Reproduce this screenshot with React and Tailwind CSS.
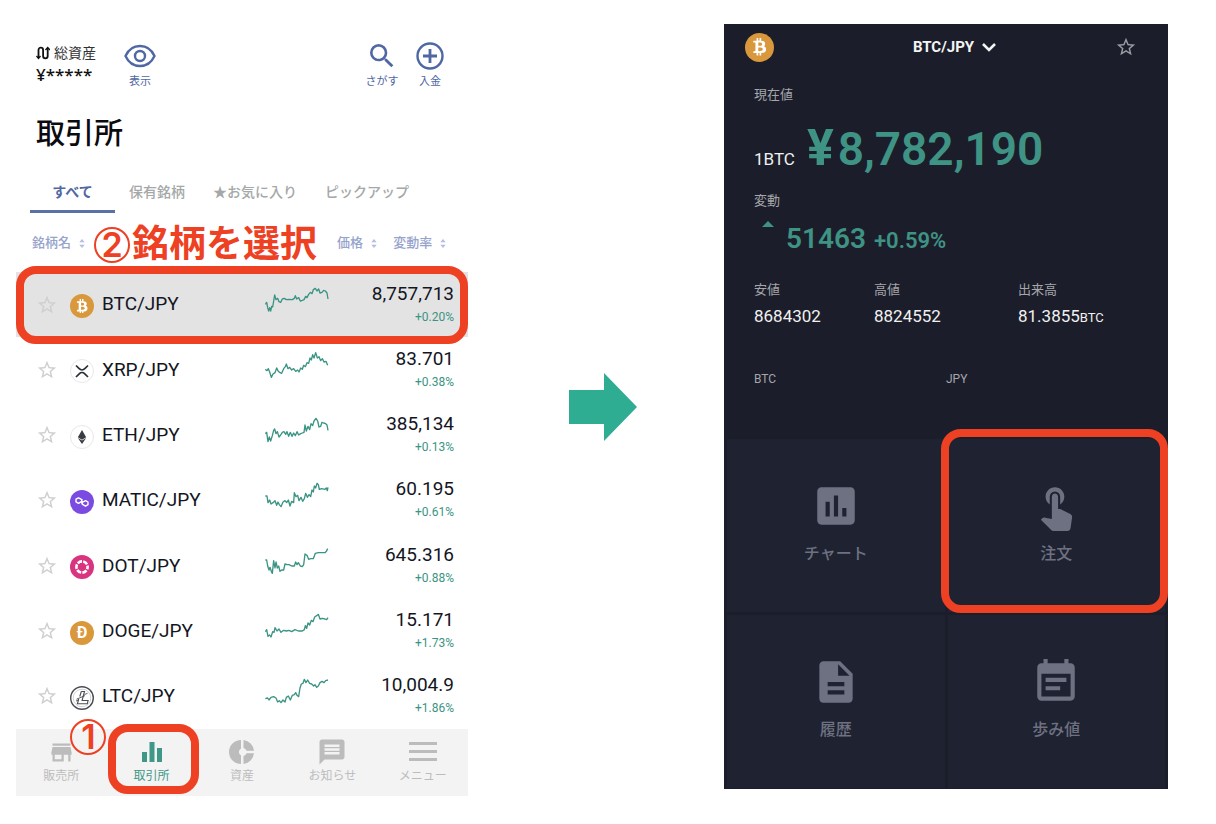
import {
  MdDescription,
  MdEventNote,
  MdInsertChart,
  MdMessage,
  MdSearch,
  MdStarBorder,
  MdStore,
  MdTouchApp,
} from "react-icons/md";
import { FaBtc, FaEthereum } from "react-icons/fa";

function BtcIcon({ className }) {
  return (
    <span className={`flex items-center justify-center rounded-full bg-[#d9983c] text-white ${className}`}>
      <FaBtc className="h-3/5 w-3/5" />
    </span>
  );
}

function XrpIcon() {
  return (
    <svg viewBox="0 0 24 24" className="size-6" fill="none">
      <circle cx="12" cy="12" r="11.5" fill="#fff" stroke="#e8e8e8" />
      <path d="M6 6.5l3.2 3.2a4 4 0 0 0 5.6 0L18 6.5M6 18l3.2-3.2a4 4 0 0 1 5.6 0L18 18" stroke="#2b2f38" strokeWidth="1.7" />
    </svg>
  );
}

function EthIcon() {
  return (
    <span className="flex size-6 items-center justify-center rounded-full border border-[#e8e8e8] bg-white text-[#3a3c44]">
      <FaEthereum className="size-3.5" />
    </span>
  );
}

function MaticIcon() {
  return (
    <svg viewBox="0 0 24 24" className="size-6" fill="none">
      <circle cx="12" cy="12" r="12" fill="#7b4ae0" />
      <path
        d="M12.600 10.300L11 9.200 8.500 7.800 6 9.200v2.700l2.500 1.400 2.400-1.400 2.200 1.200M11.400 13.300l1.600 1.400 2.500 1.500 2.500-1.500v-2.700l-2.500-1.400-2.400 1.400-2.200-1.200"
        stroke="#fff"
        strokeWidth="1.4"
        strokeLinejoin="round"
      />
    </svg>
  );
}

function DotIcon() {
  return (
    <svg viewBox="0 0 24 24" className="size-6" fill="none">
      <circle cx="12" cy="12" r="12" fill="#d9347f" />
      <circle cx="12" cy="12" r="5.6" stroke="#fff" strokeWidth="2.600" strokeDasharray="4.6 1.26" strokeDashoffset="2.3" />
    </svg>
  );
}

function DogeIcon() {
  return (
    <span className="flex size-6 items-center justify-center rounded-full bg-[#d9983c] text-base font-bold text-white">
      Ð
    </span>
  );
}

function LtcIcon() {
  return (
    <svg viewBox="0 0 24 24" className="size-6" fill="none" stroke="#4a4d55">
      <circle cx="12" cy="12" r="11.3" fill="#fff" strokeWidth="1.4" />
      <circle cx="12" cy="12" r="8.8" stroke="#c4c6ca" strokeWidth="0.8" />
      <path d="M11.3 5.5h3.2l-2.4 9h6l-.8 3.3H7.4L8.700 13M11.300 5.500L9.800 10.500" strokeWidth="1.1" />
      <path d="M6.500 13.200l8.500-3.600M6 15l3-1.300M14.500 8.500l3-1.200" strokeWidth="0.9" />
    </svg>
  );
}

const PAIRS = [
  {
    name: "BTC/JPY",
    price: "8,757,713",
    change: "+0.20%",
    icon: <BtcIcon className="size-6" />,
    line: "1,52 5,46 8,62 11,72 14,62 17,72 20,58 23,60 26,42 29,24 33,38 38,34 42,44 47,46 52,36 58,34 64,38 72,37 82,38 88,34 91,26 95,36 101,32 106,42 112,40 117,38 122,28 126,32 131,22 136,16 141,20 145,8 151,4 156,12 161,6 165,18 171,16 176,10 181,12 186,18 189,36",
  },
  {
    name: "XRP/JPY",
    price: "83.701",
    change: "+0.38%",
    icon: <XrpIcon />,
    line: "1,52 6,56 10,50 14,60 19,76 24,66 30,62 35,48 40,58 45,62 50,64 56,50 61,44 64,36 69,50 74,46 80,54 86,50 92,58 98,54 102,60 107,48 112,52 116,40 121,44 126,32 131,34 135,18 139,24 143,8 147,18 152,2 157,18 162,14 167,26 172,20 177,30 183,28 188,40",
  },
  {
    name: "ETH/JPY",
    price: "385,134",
    change: "+0.13%",
    icon: <EthIcon />,
    line: "1,50 5,46 9,74 13,60 17,72 22,56 26,40 29,36 33,50 37,44 42,60 47,54 52,46 57,44 62,52 66,44 71,58 76,46 81,58 86,48 91,56 96,44 101,54 107,50 112,48 117,46 120,24 124,42 129,28 134,38 138,20 143,26 147,12 153,4 158,12 162,30 167,28 171,16 176,18 182,20 186,24 189,40",
  },
  {
    name: "MATIC/JPY",
    price: "60.195",
    change: "+0.61%",
    icon: <MaticIcon />,
    line: "1,42 6,42 9,62 14,54 18,66 24,62 30,56 35,70 39,60 43,68 48,74 54,60 60,56 65,62 70,54 75,72 80,58 86,62 88,32 93,44 98,40 102,56 108,46 113,58 118,50 122,34 127,46 132,38 137,44 141,24 145,30 148,12 152,18 156,4 160,8 163,22 170,20 180,22 184,18 187,26 189,16",
  },
  {
    name: "DOT/JPY",
    price: "645.316",
    change: "+0.88%",
    icon: <DotIcon />,
    line: "1,36 5,36 8,54 12,66 15,58 19,70 22,76 26,38 30,60 33,42 37,60 41,54 45,70 50,66 56,66 60,48 66,50 72,50 80,54 88,54 92,42 96,50 100,44 106,54 112,56 116,50 120,18 126,22 131,34 137,32 145,32 151,16 160,14 180,14 184,10 188,2",
  },
  {
    name: "DOGE/JPY",
    price: "15.171",
    change: "+1.73%",
    icon: <DogeIcon />,
    line: "1,56 5,50 9,70 14,66 18,72 23,56 27,58 30,44 36,54 42,48 48,58 56,52 64,54 72,52 80,56 90,50 100,54 112,54 118,50 121,38 125,46 129,30 134,36 139,22 144,26 149,12 155,8 160,4 165,18 172,16 180,18 185,20 189,14",
  },
  {
    name: "LTC/JPY",
    price: "10,004.9",
    change: "+1.86%",
    icon: <LtcIcon />,
    line: "1,62 8,60 12,66 18,58 26,56 33,60 38,72 43,68 48,74 54,66 60,72 64,58 70,54 76,66 82,52 88,50 92,44 96,52 101,56 105,30 109,18 114,16 118,4 123,14 128,6 134,16 140,18 146,24 150,20 155,28 160,24 165,14 171,10 177,14 182,8 189,6",
  },
];

function BarsIcon() {
  return (
    <svg viewBox="0 0 20 20" className="size-5" fill="currentColor">
      <path d="M0 10h5v10H0zM7.500 0h5v20h-5zM15 6h5v14h-5z" />
    </svg>
  );
}

function DonutIcon() {
  return (
    <svg viewBox="0 0 26 26" className="size-[26px]" fill="currentColor">
      <path d="M12 1v8.500a4 4 0 0 0 0 7V25A12 12 0 0 1 12 1zM14.500 1A12 12 0 0 1 25 11.700h-7.500a4 4 0 0 0-3-2.700zM14.500 17a4 4 0 0 0 3-2.700H25A12 12 0 0 1 14.500 25z" />
    </svg>
  );
}

function MenuIcon() {
  return (
    <svg viewBox="0 0 28 20" className="h-5 w-7" fill="currentColor">
      <path d="M0 0h28v3H0zM0 8h28v3H0zM0 16h28v3H0z" />
    </svg>
  );
}

const NAV = [
  { label: "販売所", icon: <MdStore className="size-[27px]" /> },
  { label: "取引所", icon: <BarsIcon />, active: true },
  { label: "資産", icon: <DonutIcon /> },
  { label: "お知らせ", icon: <MdMessage className="size-[30px]" /> },
  { label: "メニュー", icon: <MenuIcon /> },
];

const TILES = [
  { label: "チャート", Icon: MdInsertChart },
  { label: "注文", Icon: MdTouchApp, marked: true },
  { label: "履歴", Icon: MdDescription },
  { label: "歩み値", Icon: MdEventNote },
];

// Red frame drawn over the control the step points at
function Marker({ className }) {
  return <span className={`pointer-events-none absolute z-10 rounded-[20px] border-8 border-[#ee4023] ${className}`} />;
}

function StepNumber({ children }) {
  return (
    <span className="flex size-9 shrink-0 items-center justify-center rounded-full border-2 border-[#ee4023] font-[Inter] text-[34px] leading-none font-semibold text-[#ee4023]">
      {children}
    </span>
  );
}

function SortArrows() {
  return (
    <svg viewBox="0 0 6 10" className="ml-2 inline h-[9px] w-[6px] opacity-70" fill="currentColor">
      <path d="M3 0l3 3.500H0zM3 10L0 6.500h6z" />
    </svg>
  );
}

function HeaderAction({ label, children }) {
  return (
    <button className="flex w-12 flex-col items-center text-[11px] leading-4 text-[#4f67a3]">
      <span className="flex h-7 items-center">{children}</span>
      <span className="mt-1">{label}</span>
    </button>
  );
}

function Sparkline({ points }) {
  return (
    <svg viewBox="0 0 192 78" className="mb-[10px] h-[26px] w-16" fill="none">
      <polyline points={points} stroke="#3a9483" strokeWidth="4" strokeLinejoin="round" />
    </svg>
  );
}

function Exchange() {
  return (
    <section>
      {/* Header */}
      <header className="flex h-[68px] items-start pt-[18px] pr-3.5 pl-5">
        <div className="w-20">
          <div className="flex h-[22px] items-center gap-1 text-[14px] text-[#333]">
            <svg viewBox="0 0 14 14" className="h-[14px] w-[14px] shrink-0" fill="none" stroke="#111" strokeWidth="1.8">
              <path d="M2.500 12V4a2.300 2.300 0 0 1 4.600 0v6a2.300 2.300 0 0 0 4.600 0V2" />
              <path d="M.5 10l2 2.500 2-2.500M9.500 4l2.200-2.500L14 4" strokeWidth="1.300" />
            </svg>
            総資産
          </div>
          <div className="h-[22px] font-['Noto_Sans'] text-[17px] leading-[22px] font-medium text-[#111]">¥*****</div>
        </div>
        <HeaderAction label="表示">
          <svg viewBox="0 0 32 24" className="h-6 w-8" fill="none" stroke="currentColor" strokeWidth="2.400">
            <path d="M1.500 12C4.500 5.500 10 2 16 2s11.500 3.500 14.500 10C27.500 18.500 22 22 16 22S4.500 18.500 1.500 12z" />
            <circle cx="16" cy="12" r="5" />
          </svg>
        </HeaderAction>
        <div className="ml-auto flex">
          <HeaderAction label="さがす">
            <MdSearch className="size-8" />
          </HeaderAction>
          <HeaderAction label="入金">
            <svg viewBox="0 0 28 28" className="size-7" fill="none" stroke="currentColor" strokeWidth="2.400">
              <circle cx="14" cy="14" r="12.500" />
              <path d="M14 7v14M7 14h14" strokeWidth="2.800" />
            </svg>
          </HeaderAction>
        </div>
      </header>

      <h1 className="mt-[22px] px-5 text-[29px] leading-10 font-medium text-[#0b0b0f]">取引所</h1>

      {/* Tabs */}
      <nav className="mt-[25px] flex h-[34px] pl-3.5 text-[14px] font-medium whitespace-nowrap text-[#a5a8a8]">
        <button className="w-[85px] border-b-3 border-[#5a70a8] pb-1 font-bold text-[#4f67a3]">すべて</button>
        <button className="border-b-3 border-transparent px-3.5 pb-1">保有銘柄</button>
        <button className="border-b-3 border-transparent px-3.5 pb-1">★お気に入り</button>
        <button className="border-b-3 border-transparent px-3.5 pb-1">ピックアップ</button>
      </nav>

      {/* Pairs */}
      <div className="relative">
        <div className="absolute top-2.5 left-[78px] z-10 flex items-center gap-0.5 text-[37px] leading-[44px] font-bold whitespace-nowrap text-[#ee4023]">
          <StepNumber>2</StepNumber>
          銘柄を選択
        </div>
        <table className="h-[516px] w-full table-fixed">
          <colgroup>
            <col className="w-[55%]" />
            <col className="w-[16%]" />
            <col className="w-[12%]" />
            <col className="w-[17%]" />
          </colgroup>
          <thead>
            <tr className="h-[59px] text-left text-[13px] text-[#96a3cc]">
              <th colSpan={2} className="pl-4 font-medium">
                銘柄名
                <SortArrows />
              </th>
              <th className="font-medium whitespace-nowrap">
                価格
                <SortArrows />
              </th>
              <th className="pl-0.5 font-medium whitespace-nowrap">
                変動率
                <SortArrows />
              </th>
            </tr>
          </thead>
          <tbody>
            {PAIRS.map((pair, i) => (
              <tr key={pair.name} className={i === 0 ? "relative bg-[#e3e3e3]" : ""}>
                <td className="py-0 pl-5">
                  {i === 0 && <Marker className="inset-x-0 -top-1.5 -bottom-[7px]" />}
                  <div className="flex items-center">
                    <MdStarBorder className="size-[22px] text-[#cfcfcf]" />
                    <span className="mt-[3px] ml-3 shrink-0">{pair.icon}</span>
                    <span className="ml-2 text-[19px] text-[#14161f]">{pair.name}</span>
                  </div>
                </td>
                <td className="p-0">
                  <Sparkline points={pair.line} />
                </td>
                <td colSpan={2} className="py-0 pr-3.5 text-right">
                  <div className="text-[19px] leading-6 text-[#14161f]">{pair.price}</div>
                  <div className="text-[12px] leading-[22px] text-[#3a9483]">{pair.change}</div>
                </td>
              </tr>
            ))}
          </tbody>
        </table>
      </div>

      {/* Bottom navigation */}
      <nav className="grid h-[67px] grid-cols-5 bg-[#f3f3f3]">
        {NAV.map((item) => (
          <button
            key={item.label}
            className={`relative flex flex-col items-center pt-2 text-[12px] leading-[18px] ${
              item.active ? "text-[#3f9787]" : "text-[#bcbcbc]"
            }`}
          >
            <span className="flex h-[30px] items-center">{item.icon}</span>
            {item.label}
            {item.active && (
              <>
                <Marker className="-top-[5px] -right-0.5 bottom-[2px] left-0.5" />
                <span className="absolute -top-2.5 -left-9 z-10">
                  <StepNumber>1</StepNumber>
                </span>
              </>
            )}
          </button>
        ))}
      </nav>
    </section>
  );
}

function Stat({ label, value, unit }) {
  return (
    <div>
      <dt className="text-[13px] leading-5 text-[#a5a6aa]">{label}</dt>
      <dd className="mt-1 text-[17px] leading-6 text-[#f0f0f0]">
        {value}
        {unit && <span className="text-[13px]">{unit}</span>}
      </dd>
    </div>
  );
}

function PairDetail() {
  return (
    <section className="bg-[#1b1e2a] pb-px">
      <header className="flex h-[46px] items-center justify-between pr-[31px] pl-[21px]">
        <BtcIcon className="size-[29px]" />
        <button className="ml-5 flex items-center gap-2 text-[15px] font-bold text-[#f4f4f4]">
          BTC/JPY
          <svg viewBox="0 0 14 9" className="h-[9px] w-3.5" fill="none" stroke="currentColor" strokeWidth="2.600">
            <path d="M1 1l6 6 6-6" />
          </svg>
        </button>
        <MdStarBorder className="size-[22px] text-[#9b9ca1]" />
      </header>

      <div className="px-[30px] text-[#a5a6aa]">
        <p className="mt-[15px] text-[13px] leading-5">現在値</p>
        <div className="mt-[15px] flex h-14 items-baseline leading-[56px] font-semibold whitespace-nowrap text-[#3f9384]">
          <span className="text-[17px] font-normal text-[#f0f0f0]">1BTC</span>
          <span className="mr-1 ml-3 text-[50px] font-bold">¥</span>
          <span className="text-[46px]">8,782,190</span>
        </div>
        <p className="mt-[15px] text-[13px] leading-5">変動</p>
        <div className="mt-2.5 flex h-9 items-baseline leading-9 font-semibold text-[#3f9384]">
          <svg viewBox="0 0 12 6" className="ml-2 h-1.5 w-3 self-start" fill="currentColor">
            <path d="M6 0l6 6H0z" />
          </svg>
          <span className="ml-3 text-[28px]">51463</span>
          <span className="ml-2 text-[22px]">+0.59%</span>
        </div>
        <dl className="mt-[23px] grid grid-cols-[120fr_144fr_120fr]">
          <Stat label="安値" value="8684302" />
          <Stat label="高値" value="8824552" />
          <Stat label="出来高" value="81.3855" unit="BTC" />
        </dl>
        <div className="mt-[39px] grid grid-cols-2 text-[12px] leading-5">
          <span>BTC</span>
          <span>JPY</span>
        </div>
      </div>

      {/* Actions */}
      <div className="mt-[50px] grid grid-cols-2 gap-[3px] px-[3px]">
        {TILES.map(({ label, Icon, marked }) => (
          <button
            key={label}
            className="relative flex h-[173px] flex-col items-center bg-[#1f2230] pt-[42px] text-base leading-6 font-medium text-[#6d7182]"
          >
            <Icon className="size-[50px]" />
            <span className="mt-[11px]">{label}</span>
            {marked && <Marker className="-top-[10px] -right-[3px] -bottom-px -left-[7px]" />}
          </button>
        ))}
      </div>
    </section>
  );
}

export default function App() {
  return (
    <main className="grid min-h-screen grid-cols-[452fr_256fr_444fr] items-start bg-white pt-6 pr-12 pl-4 font-[Roboto,'Noto_Sans_CJK_JP',sans-serif]">
      <Exchange />
      <div className="flex justify-center self-center pb-[34px] pl-3.5">
        <svg viewBox="0 0 68 68" className="size-[68px]" fill="#2fad92">
          <path d="M0 17h35V0l33 34-33 34V51H0z" />
        </svg>
      </div>
      <PairDetail />
    </main>
  );
}
